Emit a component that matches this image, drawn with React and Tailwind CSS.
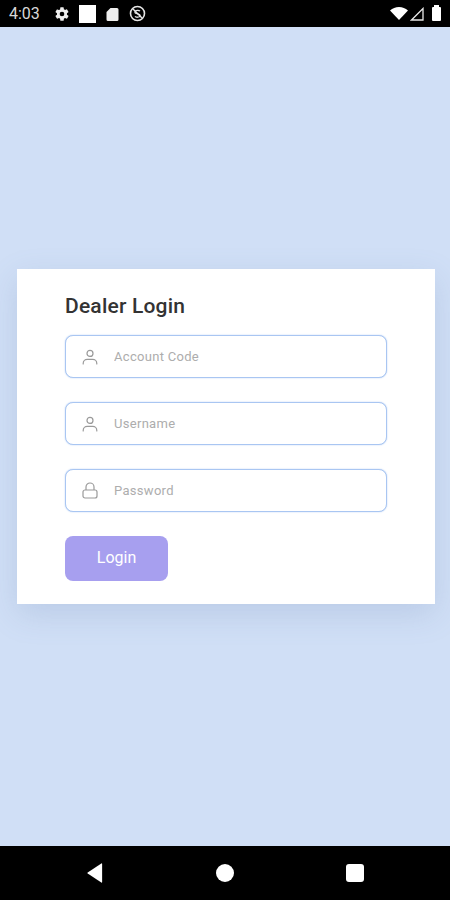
import { useState } from "react"

function UserIcon() {
  return (
    <svg width="16" height="16" viewBox="0 0 16 16" fill="none" stroke="#9a9a9a" strokeWidth="1.2" strokeLinecap="round" className="shrink-0">
      <circle cx="8" cy="4.4" r="3" />
      <path d="M1.2 15v-.6c0-2.4 2-4 4-4h5.600c2 0 4 1.600 4 4v.6" />
    </svg>
  )
}

function LockIcon() {
  return (
    <svg width="16" height="17" viewBox="0 0 16 17" fill="none" stroke="#9a9a9a" strokeWidth="1.2" className="shrink-0">
      <rect x="1" y="8" width="14" height="8" rx="2" />
      <path d="M4 8V5a4 4 0 0 1 8 0v3" />
    </svg>
  )
}

function Field({ icon, placeholder, type = "text" }) {
  const [value, setValue] = useState("")
  return (
    <div className="flex items-center h-[43px] border border-[#a9c6f2] shadow-[0_0_1.5px_#a9c6f2] rounded-lg pl-[16px] bg-white">
      {icon}
      <input
        type={type}
        value={value}
        placeholder={placeholder}
        onChange={(e) => setValue(e.target.value)}
        className="ml-[16px] pt-[1px] flex-1 min-w-0 outline-none text-[13px] tracking-[0.3px] text-[#444] placeholder:text-[#adadad]"
      />
    </div>
  )
}

export default function App() {
  return (
    <div className="w-[450px] h-[900px] flex flex-col bg-[#d0dff6] font-['Roboto',sans-serif] overflow-hidden">
      {/* status bar */}
      <div className="h-[27px] shrink-0 bg-black flex items-center pl-[9px] pr-[9px] text-white">
        <span className="text-[16px] text-[#d8d8d8] w-[44px]">4:03</span>
        <svg width="16" height="16" viewBox="0 0 24 24" fill="#eee" className="ml-[1px]">
          <path d="M19.400 13c.04-.33.06-.66.06-1s-.02-.67-.06-1l2.100-1.650a.5.5 0 0 0 .12-.64l-2-3.460a.5.5 0 0 0-.6-.22l-2.500 1a7.300 7.300 0 0 0-1.700-1l-.38-2.650A.5.5 0 0 0 14 2h-4a.5.5 0 0 0-.5.42L9.120 5.070c-.6.250-1.170.6-1.700 1l-2.500-1a.5.5 0 0 0-.6.22l-2 3.460a.5.5 0 0 0 .12.640L4.540 11a8 8 0 0 0 0 2l-2.100 1.650a.5.5 0 0 0-.12.640l2 3.460c.12.220.38.300.6.220l2.500-1c.53.400 1.100.750 1.700 1l.38 2.650c.04.240.25.420.5.420h4c.25 0 .46-.18.5-.42l.38-2.650c.6-.25 1.170-.6 1.700-1l2.500 1c.22.080.48 0 .6-.22l2-3.460a.5.5 0 0 0-.12-.640L19.400 13zM12 15.500a3.500 3.500 0 1 1 0-7 3.500 3.500 0 0 1 0 7z" />
        </svg>
        <div className="w-[17px] h-[18px] bg-white ml-[9px]" />
        <svg width="13" height="14" viewBox="0 0 13 14" fill="#eee" className="ml-[10px]">
          <path d="M4.500 1H11a1.500 1.500 0 0 1 1.500 1.500v10A1.500 1.500 0 0 1 11 14H2a1.500 1.500 0 0 1-1.500-1.500V5L4.500 1z" />
        </svg>
        <svg width="17" height="17" viewBox="0 0 17 17" fill="none" stroke="#e6e6e6" className="ml-[10px]">
          <circle cx="8.500" cy="8.500" r="7" strokeWidth="1.600" />
          <path d="M4 4l9 9" strokeWidth="1.400" />
          <path d="M11 6.200C10 5 6.500 5 6 6.800c-.3 1.300 1.200 1.700 2.500 2 1.300.3 2.800.7 2.500 2-.5 1.800-4 1.800-5 .6" strokeWidth="1.300" />
        </svg>
        <div className="flex-1" />
        <svg width="18" height="13" viewBox="0 0 18 13" fill="#fff">
          <path d="M0 3.500C2.500 1.300 5.600 0 9 0s6.500 1.300 9 3.500L9 13 0 3.500z" />
        </svg>
        <svg width="14" height="14" viewBox="0 0 14 14" fill="none" stroke="#e8e8e8" strokeWidth="1.300" className="ml-[2px]">
          <path d="M1.500 13L13 1.500V13H1.500z" />
        </svg>
        <div className="relative w-[9px] h-[14px] bg-white rounded-[1px] ml-[8px]">
          <div className="absolute -top-[2px] left-[2px] w-[5px] h-[2px] bg-white" />
        </div>
      </div>

      {/* main */}
      <div className="flex-1 flex items-center justify-center pl-[2px]">
        <div className="w-[418px] h-[335px] bg-white px-12 shadow-[0_10px_30px_rgba(100,125,170,0.2)]">
          <h1 className="h-[66px] pt-[22px] text-[21px] leading-[30px] font-medium text-[#333] tracking-[0.2px]">Dealer Login</h1>
          <div className="flex flex-col gap-6">
            <Field icon={<UserIcon />} placeholder="Account Code" />
            <Field icon={<UserIcon />} placeholder="Username" />
            <Field icon={<LockIcon />} placeholder="Password" type="password" />
            <button className="w-[103px] h-[45px] pb-[1px] bg-[#a79fef] rounded-lg text-white text-[16px] font-normal">Login</button>
          </div>
        </div>
      </div>

      {/* nav bar */}
      <div className="h-[54px] shrink-0 bg-black flex items-center pl-[87px] gap-[112px]">
        <svg width="16" height="20" viewBox="0 0 18 20" fill="#fff" preserveAspectRatio="none" className="mr-[1px]">
          <path d="M17 1v18a.6.6 0 0 1-.9.5L.8 10.500a.6.6 0 0 1 0-1L16.100.5A.6.6 0 0 1 17 1z" />
        </svg>
        <div className="w-[18px] h-[18px] rounded-full bg-white" />
        <div className="w-[18px] h-[18px] rounded-[3px] bg-white" />
      </div>
    </div>
  )
}
